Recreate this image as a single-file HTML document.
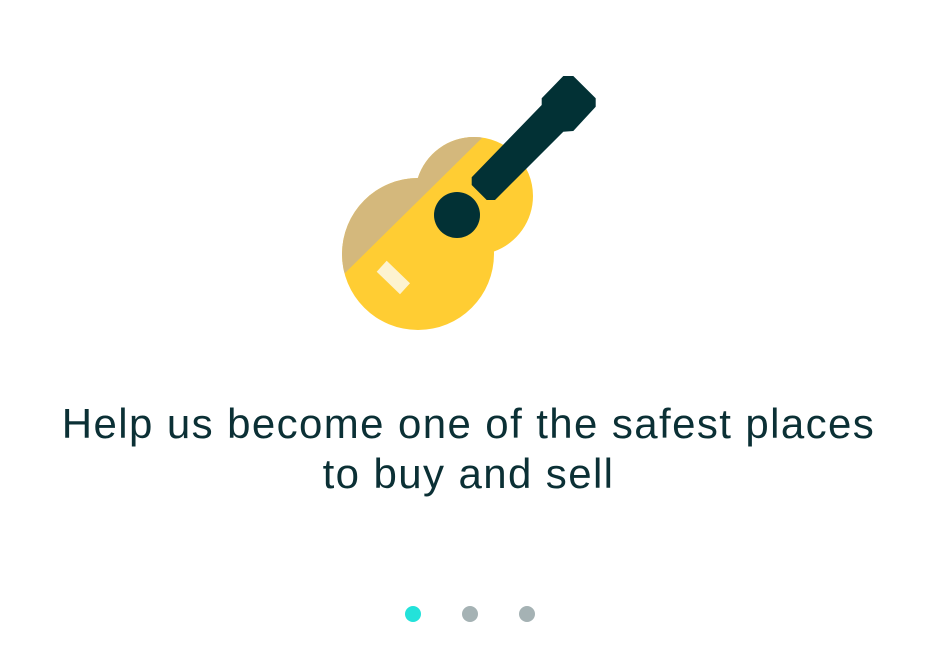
<!DOCTYPE html>
<html><head><style>
html,body{margin:0;padding:0;background:#fff;width:925px;height:650px;overflow:hidden}
.t{position:absolute;left:6px;width:925px;text-align:center;font-family:"Liberation Sans",sans-serif;font-size:42px;letter-spacing:1.4px;color:#0b3035;line-height:50px;top:399px}
.d{position:absolute;top:606px;width:16px;height:16px;border-radius:50%;background:#a5b2b4}
</style></head><body>
<svg width="925" height="650" style="position:absolute;left:0;top:0">
<defs><clipPath id="b"><circle cx="418" cy="254" r="76"/><circle cx="474" cy="196" r="59"/></clipPath></defs>
<g clip-path="url(#b)">
<rect x="300" y="100" width="300" height="260" fill="#ffcd33"/>
<polygon points="300,100 500,100 482,138 345,273 300,318" fill="#d4b87c"/>
</g>
<polygon points="376.7,271.7 386.7,260.7 410,283.3 400,294.3" fill="#fdf3d0"/>
<circle cx="457" cy="215" r="23" fill="#023135"/>
<polygon points="471.7,177.3 541.7,105 541.7,98.3 563.3,76 573.3,76 595.7,98.3 595.7,106.7 573.3,131 563.3,131.7 495,200 486.7,200 471.7,185" fill="#023135"/>
</svg>
<div class="t">Help us become one of the safest places<br>to buy and sell</div>
<div class="d" style="left:405px;background:#23e2da"></div>
<div class="d" style="left:462px"></div>
<div class="d" style="left:519px"></div>
</body></html>
